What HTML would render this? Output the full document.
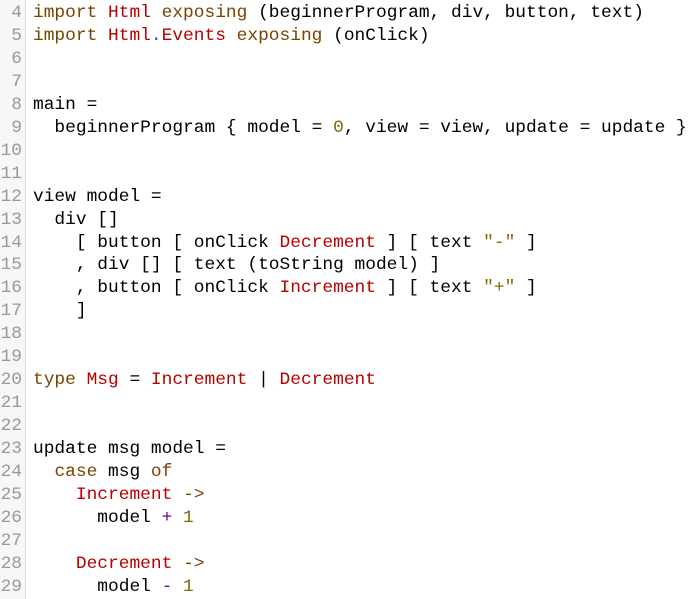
<!DOCTYPE html>
<html><head><style>
html,body{margin:0;padding:0;background:#fff;width:692px;height:599px;overflow:hidden}
.g{position:absolute;left:0;top:0;width:25px;height:599px;background:#f7f7f7;border-right:1px solid #ddd}
pre{margin:0;font-family:"Liberation Mono",monospace;font-size:17.87px;line-height:22.96px;position:absolute;top:2px;left:0}
.n{color:#999;display:inline-block;width:22px;text-align:right;margin-right:11px}
.k{color:#7a4400}.r{color:#b80000}.b{color:#3050b0}.o{color:#7a6a00}.p{color:#7000a0}.s{color:#8a6a00}
</style></head><body><div class="g"></div>
<pre><span class="n">4</span><span class="k">import</span> <span class="r">Html</span> <span class="k">exposing</span> (beginnerProgram, div, button, text)
<span class="n">5</span><span class="k">import</span> <span class="r">Html</span><span class="b">.</span><span class="r">Events</span> <span class="k">exposing</span> (onClick)
<span class="n">6</span>
<span class="n">7</span>
<span class="n">8</span>main =
<span class="n">9</span>  beginnerProgram { model = <span class="o">0</span>, view = view, update = update }
<span class="n">10</span>
<span class="n">11</span>
<span class="n">12</span>view model =
<span class="n">13</span>  div []
<span class="n">14</span>    [ button [ onClick <span class="r">Decrement</span> ] [ text <span class="s">"-"</span> ]
<span class="n">15</span>    , div [] [ text (toString model) ]
<span class="n">16</span>    , button [ onClick <span class="r">Increment</span> ] [ text <span class="s">"+"</span> ]
<span class="n">17</span>    ]
<span class="n">18</span>
<span class="n">19</span>
<span class="n">20</span><span class="k">type</span> <span class="r">Msg</span> = <span class="r">Increment</span> | <span class="r">Decrement</span>
<span class="n">21</span>
<span class="n">22</span>
<span class="n">23</span>update msg model =
<span class="n">24</span>  <span class="k">case</span> msg <span class="k">of</span>
<span class="n">25</span>    <span class="r">Increment</span> <span class="k">-&gt;</span>
<span class="n">26</span>      model <span class="p">+</span> <span class="o">1</span>
<span class="n">27</span>
<span class="n">28</span>    <span class="r">Decrement</span> <span class="k">-&gt;</span>
<span class="n">29</span>      model <span class="p">-</span> <span class="o">1</span>
</pre></body></html>
